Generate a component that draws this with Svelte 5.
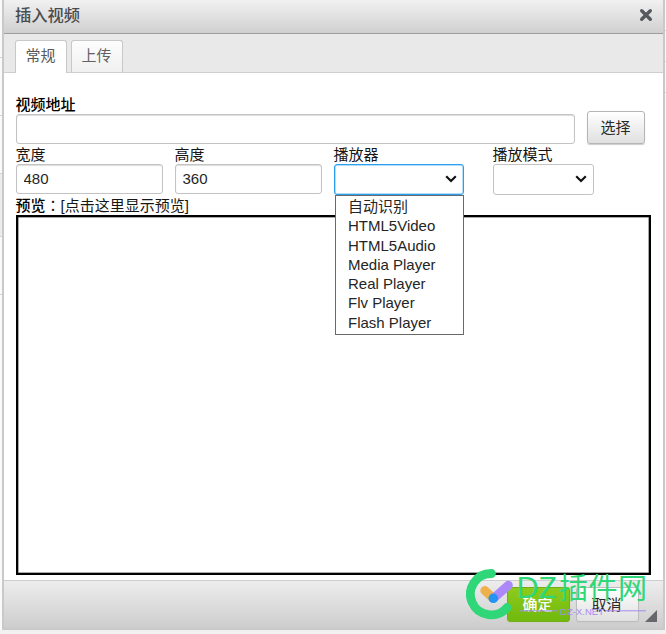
<script lang="ts">
	let width = $state('480');
	let height = $state('360');
	let address = $state('');
	let open = $state(true);
	let player = $state('');

	const players = [
		'自动识别',
		'HTML5Video',
		'HTML5Audio',
		'Media Player',
		'Real Player',
		'Flv Player',
		'Flash Player'
	];

	function choose(name: string) {
		player = name;
		open = false;
	}
</script>

{#snippet chevron()}
	<svg class="chevron" viewBox="0 0 12 8" aria-hidden="true">
		<path d="M1.2 1.3 6 6l4.8-4.7" />
	</svg>
{/snippet}

<div class="page">
	<div class="edge left">
		<i></i><i></i><i></i><i></i><i></i>
	</div>
	<div class="dialog" role="dialog" aria-label="插入视频">
		<header>
			<h1>插入视频</h1>
			<button class="close" aria-label="关闭">
				<svg viewBox="0 0 14 14"><path d="M2.7 2.7l8.6 8.6M11.3 2.7l-8.6 8.6" /></svg>
			</button>
		</header>
		<nav>
			<button class="tab active">常规</button>
			<button class="tab">上传</button>
		</nav>

		<main>
			<div class="label strong">视频地址</div>
			<div class="address">
				<input bind:value={address} aria-label="视频地址" />
				<button class="btn">选择</button>
			</div>
			<div class="fields">
				<div class="field">
					<div class="label">宽度</div>
					<input bind:value={width} aria-label="宽度" />
				</div>
				<div class="field">
					<div class="label">高度</div>
					<input bind:value={height} aria-label="高度" />
				</div>
				<div class="field">
					<div class="label">播放器</div>
					<button class="select focus" aria-label="播放器" onclick={() => (open = !open)}>
						<span>{player}</span>
						{@render chevron()}
					</button>
					{#if open}
						<ul>
							{#each players as name}
								<li><button onclick={() => choose(name)}>{name}</button></li>
							{/each}
						</ul>
					{/if}
				</div>
				<div class="field">
					<div class="label">播放模式</div>
					<button class="select mode" aria-label="播放模式">
						<span></span>
						{@render chevron()}
					</button>
				</div>
			</div>
			<div class="label preview-label"><b>预览</b><span class="colon">：</span>[点击这里显示预览]</div>
			<div class="preview"></div>
		</main>

		<footer>
			<button class="btn primary">确定</button>
			<button class="btn cancel">取消</button>
			<svg class="grip" viewBox="0 0 12 12" aria-hidden="true"><path d="M12 0v12H0z" /></svg>
		</footer>
	</div>
	<div class="edge right"><i></i><i></i><i></i></div>

	<svg class="watermark" viewBox="0 0 190 60" aria-hidden="true">
		<path class="ring" d="M25.5 12.5A20.7 20.7 0 1 0 41 46.5" />
		<path class="orange" d="M18.8 29.5l8 7.5" />
		<path class="purple" d="M42.3 24.3 28.5 36.5" />
		<circle cx="27.3" cy="37.3" r="4.8" />
		<path class="rule" d="M53 49.8h38M139 49.8h41" />
		<text class="brand" x="50" y="37.3" textLength="41" lengthAdjust="spacingAndGlyphs">DZ</text>
		<text class="brand cjk" x="93" y="38" textLength="88">插件网</text>
		<text class="site" x="94" y="53.5" textLength="44">DZ-X.NET</text>
	</svg>
</div>

<style>
	:global(body) {
		margin: 0;
		overflow: hidden;
	}

	.page {
		position: relative;
		display: flex;
		box-sizing: border-box;
		width: 666px;
		height: 634px;
		padding-bottom: 4px;
		background: #f1f1f1;
		font: 15px/19px "Liberation Sans", "Noto Sans CJK SC", sans-serif;
		color: #252525;
	}

	button,
	input {
		box-sizing: border-box;
		margin: 0;
		font: inherit;
		color: inherit;
		outline: none;
	}

	.edge {
		display: flex;
		flex-direction: column;
		width: 2px;
		background: #fafafa;
	}

	.edge i {
		height: 57px;
		border-bottom: 1px solid #d5d5d5;
	}

	.edge.left i:nth-child(4) {
		height: 62px;
		background: #ececec;
	}

	.edge.right {
		width: 1px;
	}

	.edge.right i {
		height: 30px;
	}

	.dialog {
		display: flex;
		flex-direction: column;
		box-sizing: border-box;
		width: 663px;
		border: 2px solid #c9c9c9;
		border-top: 0;
		background: #fff;
	}

	header {
		display: flex;
		align-items: center;
		justify-content: space-between;
		box-sizing: border-box;
		height: 34px;
		padding: 0 10px 3px 11px;
		border-bottom: 1px solid #9e9e9e;
		background: linear-gradient(#f1f1f1, #d0d0d0);
	}

	h1 {
		margin: 0;
		font-size: 16.3px;
		font-weight: 500;
		color: #4b4b4e;
	}

	.close {
		display: flex;
		padding: 0;
		border: 0;
		background: none;
	}

	.close svg {
		width: 14px;
		height: 14px;
		fill: none;
		stroke: #55595d;
		stroke-width: 3.4;
		stroke-linecap: round;
	}

	nav {
		display: flex;
		align-items: flex-end;
		gap: 4px;
		box-sizing: border-box;
		height: 39px;
		padding-left: 11px;
		border-bottom: 1px solid #cfcfcf;
		background: #e9e9e9;
	}

	.tab {
		width: 52px;
		height: 32px;
		padding: 0 1px 2px 0;
		border: 1px solid #c8c8c8;
		border-bottom: 0;
		border-radius: 3px 3px 0 0;
		background: linear-gradient(#fdfdfd, #f0f0f0);
		color: #626262;
	}

	.tab.active {
		height: 33px;
		margin-bottom: -1px;
		padding-bottom: 3px;
		background: #fff;
		color: #585858;
	}

	main {
		flex: 1;
		padding: 22px 12px 0 11.5px;
	}

	.label {
		height: 19px;
		color: #161616;
		white-space: nowrap;
	}

	.strong,
	b {
		font-weight: 500;
		color: #000;
	}

	input,
	.select {
		display: block;
		width: 147px;
		height: 30px;
		padding: 0 7px;
		border: 1px solid #c3c3c3;
		border-radius: 3px;
		background: #fff;
		box-shadow: inset 0 1px 1px #ddd;
	}

	.address {
		display: flex;
		align-items: flex-end;
		gap: 12px;
		height: 30px;
	}

	.address input {
		width: 559px;
	}

	.btn {
		width: 58px;
		height: 33px;
		padding: 0;
		border: 1px solid #b5b5b5;
		border-radius: 3px;
		background: linear-gradient(#fff, #e0e0e0);
		box-shadow: 0 1px 1px #ccc;
		color: #292929;
	}

	.fields {
		display: flex;
		gap: 12px;
		height: 50px;
		padding-top: 1px;
	}

	.field {
		position: relative;
	}

	.field .label {
		height: 19px;
	}

	.field input {
		padding-bottom: 2px;
	}

	.select {
		display: flex;
		align-items: center;
		justify-content: space-between;
		width: 130px;
		height: 31px;
		padding: 0 6px 1px 10px;
		box-shadow: none;
	}

	.select.focus {
		border-color: #2d9ff0;
		box-shadow: inset 0 0 0 0.5px #69baf4;
	}

	.select.mode {
		width: 101px;
	}

	.field:last-child {
		margin-left: 17px;
	}

	.chevron {
		width: 12px;
		height: 8px;
		fill: none;
		stroke: #111;
		stroke-width: 2.2;
	}

	ul {
		position: absolute;
		top: 50px;
		left: 1px;
		z-index: 5;
		box-sizing: border-box;
		width: 129px;
		height: 140px;
		margin: 0;
		padding: 1px 0 0 12.5px;
		border: 1px solid #696969;
		background: #fff;
		list-style: none;
	}

	li {
		height: 19.3px;
	}

	li button {
		display: block;
		height: 19px;
		padding: 0;
		border: 0;
		background: none;
		line-height: 19px;
		white-space: nowrap;
	}

	.preview-label {
		height: 20px;
	}

	.colon {
		font-family: "Noto Sans CJK TC", sans-serif;
	}

	.preview {
		box-sizing: border-box;
		width: 635px;
		height: 360px;
		border: 2px solid #000;
		box-shadow: inset 0 0 0 0.5px #555;
	}

	footer {
		display: flex;
		align-items: flex-end;
		justify-content: flex-end;
		box-sizing: border-box;
		height: 48px;
		padding: 0 6px 6px;
		border-top: 1px solid #cdcdcd;
		background: linear-gradient(#ededed, #cdcdcd);
	}

	footer .btn {
		width: 63px;
		height: 35px;
		margin-right: 6px;
		padding: 0 2px 1px 0;
	}

	footer .cancel {
		border-color: #bcbcbc;
	}

	footer .primary {
		border-color: #75ad18;
		background: linear-gradient(#8dcb1c, #70b90d);
		color: #fff;
		font-weight: 500;
	}

	.grip {
		width: 12px;
		height: 12px;
		fill: #68686c;
	}

	.watermark {
		position: absolute;
		top: 561px;
		left: 466px;
		z-index: 6;
		width: 190px;
		height: 60px;
		fill: none;
		pointer-events: none;
	}

	.ring {
		stroke: #30d778;
		stroke-width: 8.8;
		stroke-linecap: round;
	}

	.orange,
	.purple {
		stroke: #efb14c;
		stroke-width: 9;
		stroke-linecap: round;
	}

	.purple {
		stroke: #ab89fa;
	}

	circle {
		fill: #2394f2;
	}

	.rule {
		stroke: #a78bf0;
		stroke-width: 1;
	}

	.brand {
		fill: #30d778;
		font: 29px "Noto Sans", sans-serif;
	}

	.cjk {
		font: 29px "Noto Sans CJK SC", sans-serif;
	}

	.site {
		fill: #a78bf0;
		font: 9.5px "Liberation Sans", sans-serif;
	}
</style>
